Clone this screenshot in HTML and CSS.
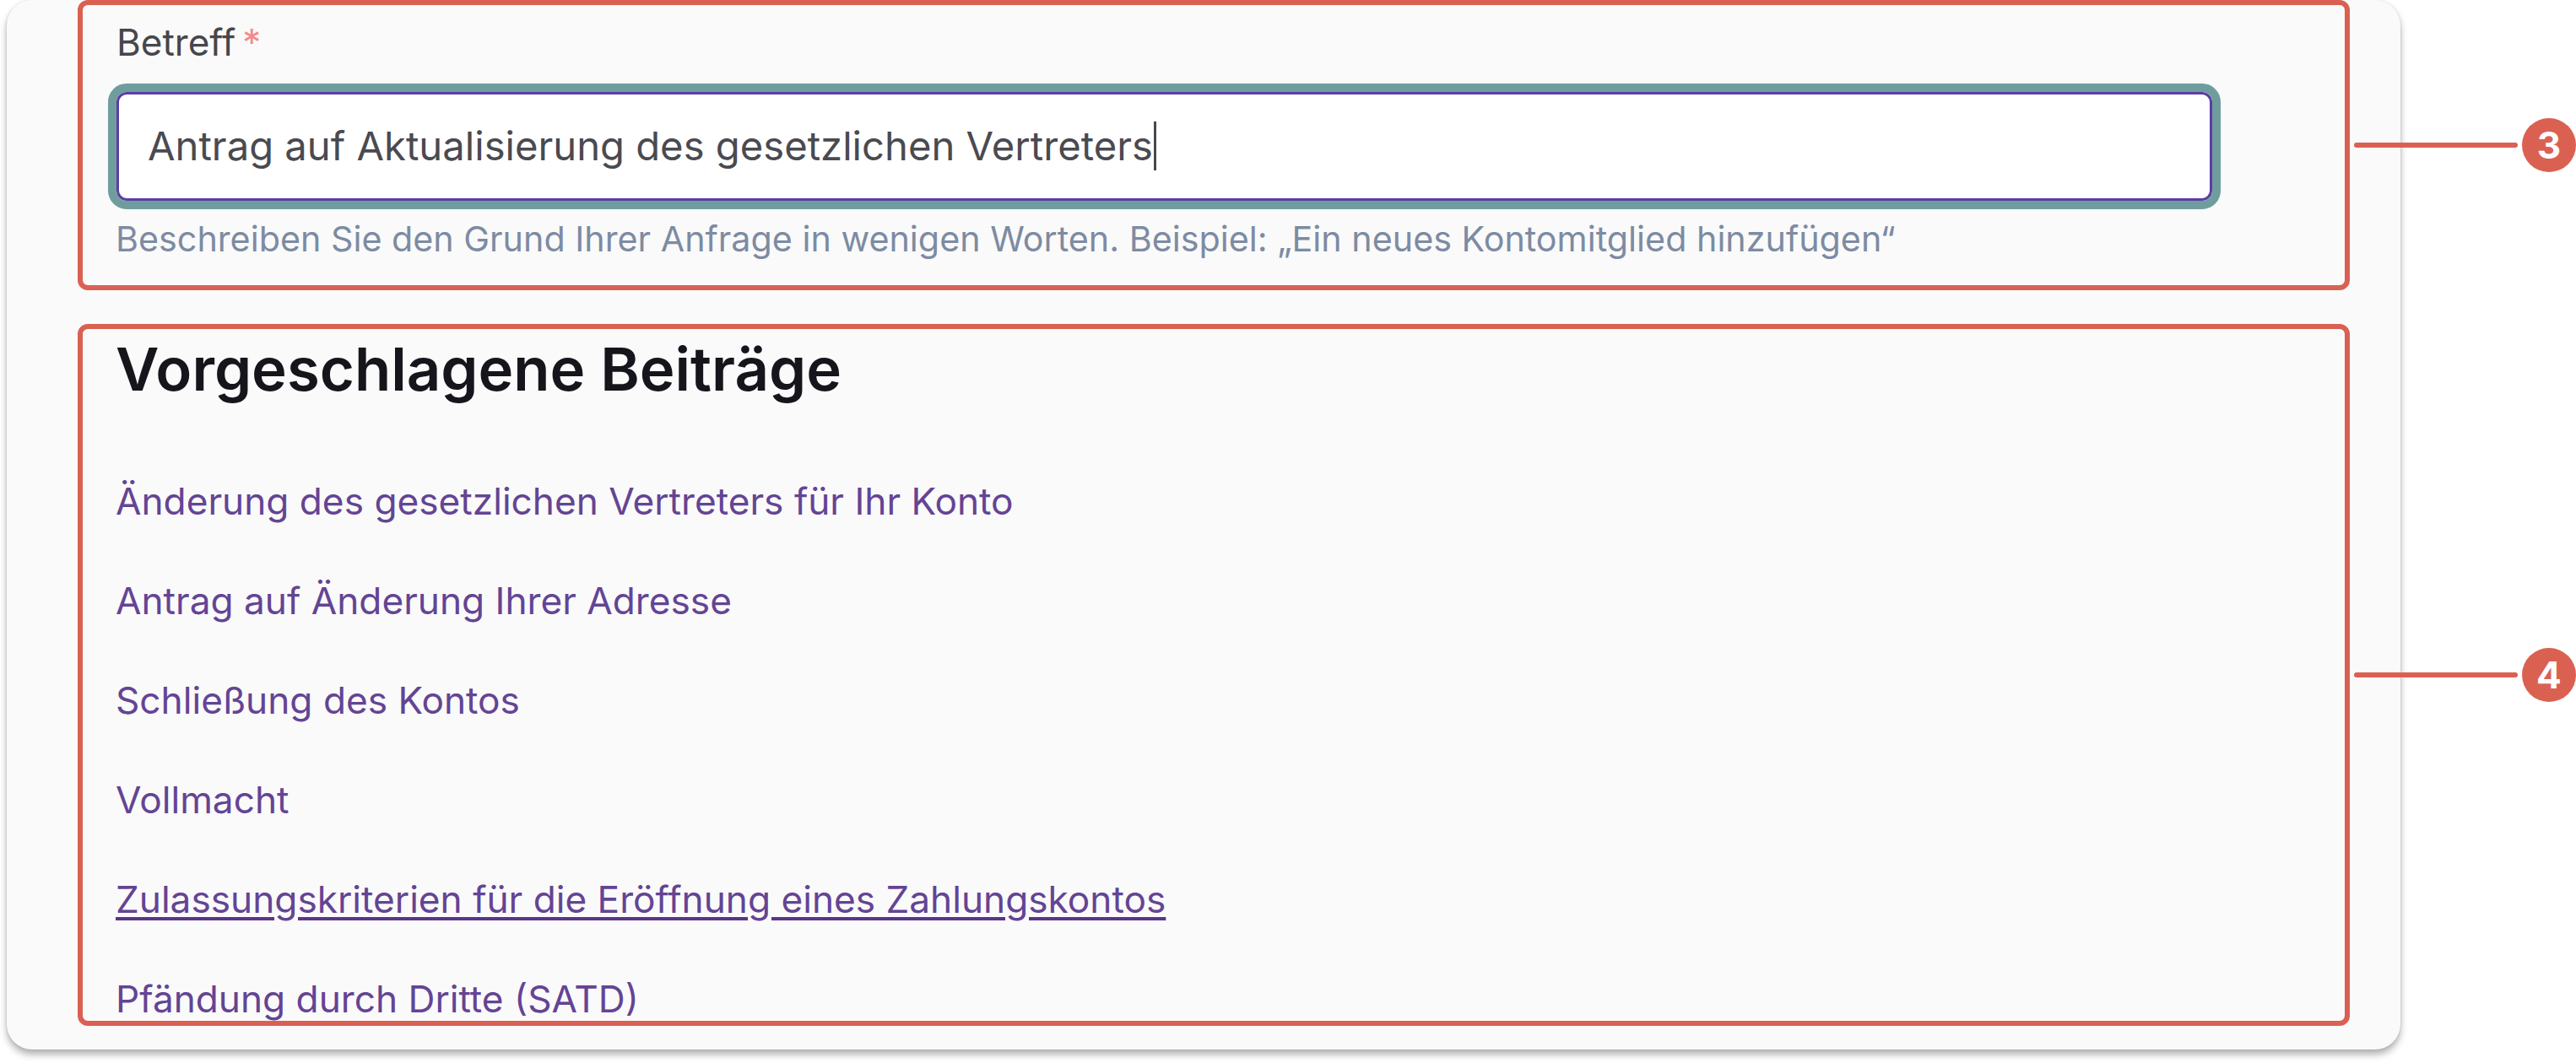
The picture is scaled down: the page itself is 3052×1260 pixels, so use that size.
FILE: index.html
```html
<!DOCTYPE html>
<html lang="de">
<head>
<meta charset="utf-8">
<title>Betreff</title>
<link rel="stylesheet" href="styles.css">
</head>
<body>
<main class="card">
  <div class="region-wrap">
    <section class="region region-field">
      <div class="label-row"><span class="label">Betreff</span><span class="required">*</span></div>
      <div class="input"><span class="input-text">Antrag auf Aktualisierung des gesetzlichen Vertreters</span><span class="caret"></span></div>
      <p class="hint">Beschreiben Sie den Grund Ihrer Anfrage in wenigen Worten. Beispiel: „Ein neues Kontomitglied hinzufügen“</p>
    </section>
    <div class="callout"><span class="callout-line"></span><span class="badge">3</span></div>
  </div>
  <div class="region-wrap">
    <section class="region region-articles">
      <h2 class="articles-title">Vorgeschlagene Beiträge</h2>
      <ul class="articles">
        <li><a class="article" href="#">Änderung des gesetzlichen Vertreters für Ihr Konto</a></li>
        <li><a class="article" href="#">Antrag auf Änderung Ihrer Adresse</a></li>
        <li><a class="article" href="#">Schließung des Kontos</a></li>
        <li><a class="article" href="#">Vollmacht</a></li>
        <li><a class="article article-hover" href="#">Zulassungskriterien für die Eröffnung eines Zahlungskontos</a></li>
        <li><a class="article" href="#">Pfändung durch Dritte (SATD)</a></li>
      </ul>
    </section>
    <div class="callout"><span class="callout-line"></span><span class="badge">4</span></div>
  </div>
</main>
</body>
</html>
```
FILE: styles.css
```css
* { box-sizing: border-box; }
html, body { margin: 0; height: 100%; background: #fff; overflow: hidden; }
body { font-family: Inter, "Liberation Sans", sans-serif; padding-left: 8px; }
.card {
  display: flex;
  flex-direction: column;
  gap: 40px;
  width: 2836px;
  height: 1244px;
  padding: 0 60px 0 84px;
  background: #fafafa;
  border-radius: 30px;
  box-shadow: 0 6px 9px rgba(0, 0, 0, .3), 0 0 3px rgba(0, 0, 0, .12);
}
.region-wrap { position: relative; }
.region {
  border: 6px solid #da6152;
  border-radius: 12px;
}
.region-field { height: 344px; padding: 17px 0 0 40px; }
.label-row { display: flex; gap: 8px; font-size: 44px; line-height: 54px; color: #46464c; }
.required { color: #f58a8a; }
.input {
  display: flex;
  align-items: center;
  width: 2483px;
  height: 129px;
  margin-top: 32px;
  padding: 0 0 2px 34px;
  background: #fff;
  border: 3px solid #5b3ea6;
  border-radius: 12px;
  outline: 10px solid #6f9d9e;
  font-size: 47.2px;
  color: #4a4a50;
}
.caret { width: 3px; height: 58px; margin-left: 1px; background: #48474d; }
.hint { margin: 21px 0 0 -1px; font-size: 41.25px; line-height: 48px; color: #7d8ba2; }
.region-articles { height: 832px; padding: 8px 0 0 40px; overflow: hidden; }
.articles-title { margin: 0 0 0 -1px; font-size: 70.7px; line-height: 80px; font-weight: 600; color: #16151c; }
.articles { list-style: none; margin: 89px 0 0 -1px; padding: 0; display: flex; flex-direction: column; gap: 64px; }
.articles li { font-size: 44.2px; line-height: 54px; }
.article { color: #644494; text-decoration: none; }
.article-hover { text-decoration: underline; text-decoration-color: #5a3588; text-decoration-thickness: 4px; text-underline-offset: 5px; }
.callout { position: absolute; left: calc(100% + 5px); top: 50%; transform: translateY(-50%); display: flex; align-items: center; gap: 5px; }
.callout-line { width: 194px; height: 6px; border-radius: 3px; background: #da6152; }
.badge {
  display: flex; align-items: center; justify-content: center;
  width: 64px; height: 64px; border-radius: 50%;
  background: #da6152; color: #fff; font-size: 44px; font-weight: 700;
}
```
